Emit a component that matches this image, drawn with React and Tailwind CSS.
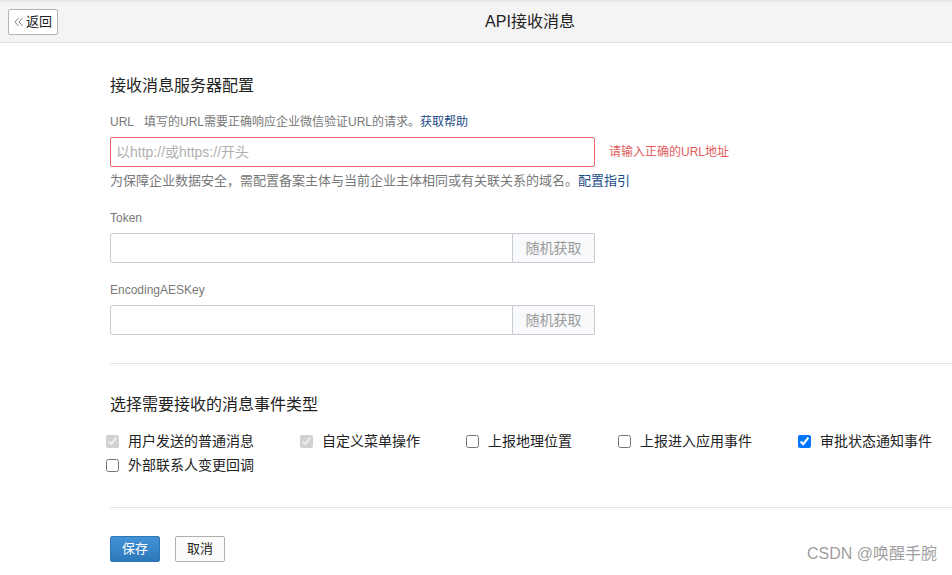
import {useState} from "react";

const events = [
  {label: "用户发送的普通消息", checked: true, disabled: true},
  {label: "自定义菜单操作", checked: true, disabled: true},
  {label: "上报地理位置", checked: false},
  {label: "上报进入应用事件", checked: false},
  {label: "审批状态通知事件", checked: true},
  {label: "外部联系人变更回调", checked: false},
];

const KeyInput = ({label}) => (
  <div>
    <div className="mt-[18px] text-[12px] leading-[18px] text-[#787878]">{label}</div>
    <div className="mt-[6px] flex h-[30px] w-[485px] rounded-[2px] border border-[#c8ccd2] bg-white">
      <input className="min-w-0 flex-1 px-2 text-[14px] outline-none" />
      <button className="w-[82px] border-l border-[#c8ccd2] bg-[#f8f9fa] text-[14px] text-[#9a9a9a]">
        随机获取
      </button>
    </div>
  </div>
);

const App = () => {
  const [checked, setChecked] = useState(events.map((e) => e.checked));

  const toggle = (i) => {
    setChecked((prev) => prev.map((v, j) => (j === i ? !v : v)));
  };

  return (
    <div
      className="relative h-[575px] w-[952px] overflow-hidden bg-white text-[#333]"
      style={{fontFamily: '"Liberation Sans", "Noto Sans CJK SC", sans-serif'}}
    >
      {/* header */}
      <div className="relative flex h-[43px] items-center border-t-2 border-b border-t-[#e8e8e8] border-b-[#dedede] bg-[#f4f4f4]">
        <button className="absolute left-[8px] top-[7px] flex h-[26px] w-[50px] items-center justify-center gap-[3px] rounded-[2px] border border-[#b4b4b4] bg-white text-[13px] text-[#222]">
          <svg width="9" height="10" viewBox="0 0 9 10" fill="none" stroke="#8a8a8a" strokeWidth="1">
            <path d="M4.5 1 L1 5 L4.5 9" />
            <path d="M8.5 1 L5 5 L8.5 9" />
          </svg>
          返回
        </button>
        <div className="w-full pl-[108px] text-center text-[16px] text-[#222]">API接收消息</div>
      </div>

      <div className="pl-[110px]">
        <h2 className="mt-[31px] text-[16px] leading-[24px] text-[#222]">接收消息服务器配置</h2>
        <div className="mt-[15px] text-[12px] leading-[18px] text-[#787878]">
          URL&nbsp;&nbsp;&nbsp;填写的URL需要正确响应企业微信验证URL的请求。
          <a className="text-[#1b4c86]">获取帮助</a>
        </div>
        <div className="mt-[6px] flex items-center">
          <input
            className="h-[30px] w-[485px] rounded-[2px] border border-[#e86666] px-[5px] text-[14px] outline-none placeholder:text-[#b0b0b0]"
            placeholder="以http://或https://开头"
          />
          <span className="ml-[14px] text-[12px] text-[#e25c5c]">请输入正确的URL地址</span>
        </div>
        <div className="mt-[4px] text-[13px] leading-[20px] text-[#787878]">
          为保障企业数据安全，需配置备案主体与当前企业主体相同或有关联关系的域名。
          <a className="text-[#1b4c86]">配置指引</a>
        </div>

        <KeyInput label="Token" />
        <KeyInput label="EncodingAESKey" />

        <div className="mt-[28px] border-t border-[#e4e4e4]" />

        <h2 className="mt-[29px] text-[16px] leading-[24px] text-[#222]">选择需要接收的消息事件类型</h2>
        <div className="-ml-[4px] mt-[12px] flex flex-wrap gap-x-[46px]">
          {events.map((e, i) => (
            <label key={e.label} className="flex h-[24px] items-center text-[14px] text-[#222]">
              <input
                type="checkbox"
                className="m-0 h-[13px] w-[13px]"
                checked={checked[i]}
                disabled={e.disabled}
                onChange={() => toggle(i)}
              />
              <span className="ml-[9px]">{e.label}</span>
            </label>
          ))}
        </div>

        <div className="mt-[30px] border-t border-[#e4e4e4]" />

        <div className="mt-[28px] flex gap-[15px]">
          <button className="h-[26px] w-[50px] rounded-[2px] border border-[#2f78b8] bg-gradient-to-b from-[#4393d8] to-[#2d78ba] text-[13px] text-white">
            保存
          </button>
          <button className="h-[26px] w-[50px] rounded-[2px] border border-[#b0b0b0] bg-[#fbfbfb] text-[13px] text-[#222]">
            取消
          </button>
        </div>
      </div>

      <div className="absolute bottom-[9px] right-[15px] text-[16px] text-[#a0a0a0]">CSDN @唤醒手腕</div>
    </div>
  );
};

export default App;
